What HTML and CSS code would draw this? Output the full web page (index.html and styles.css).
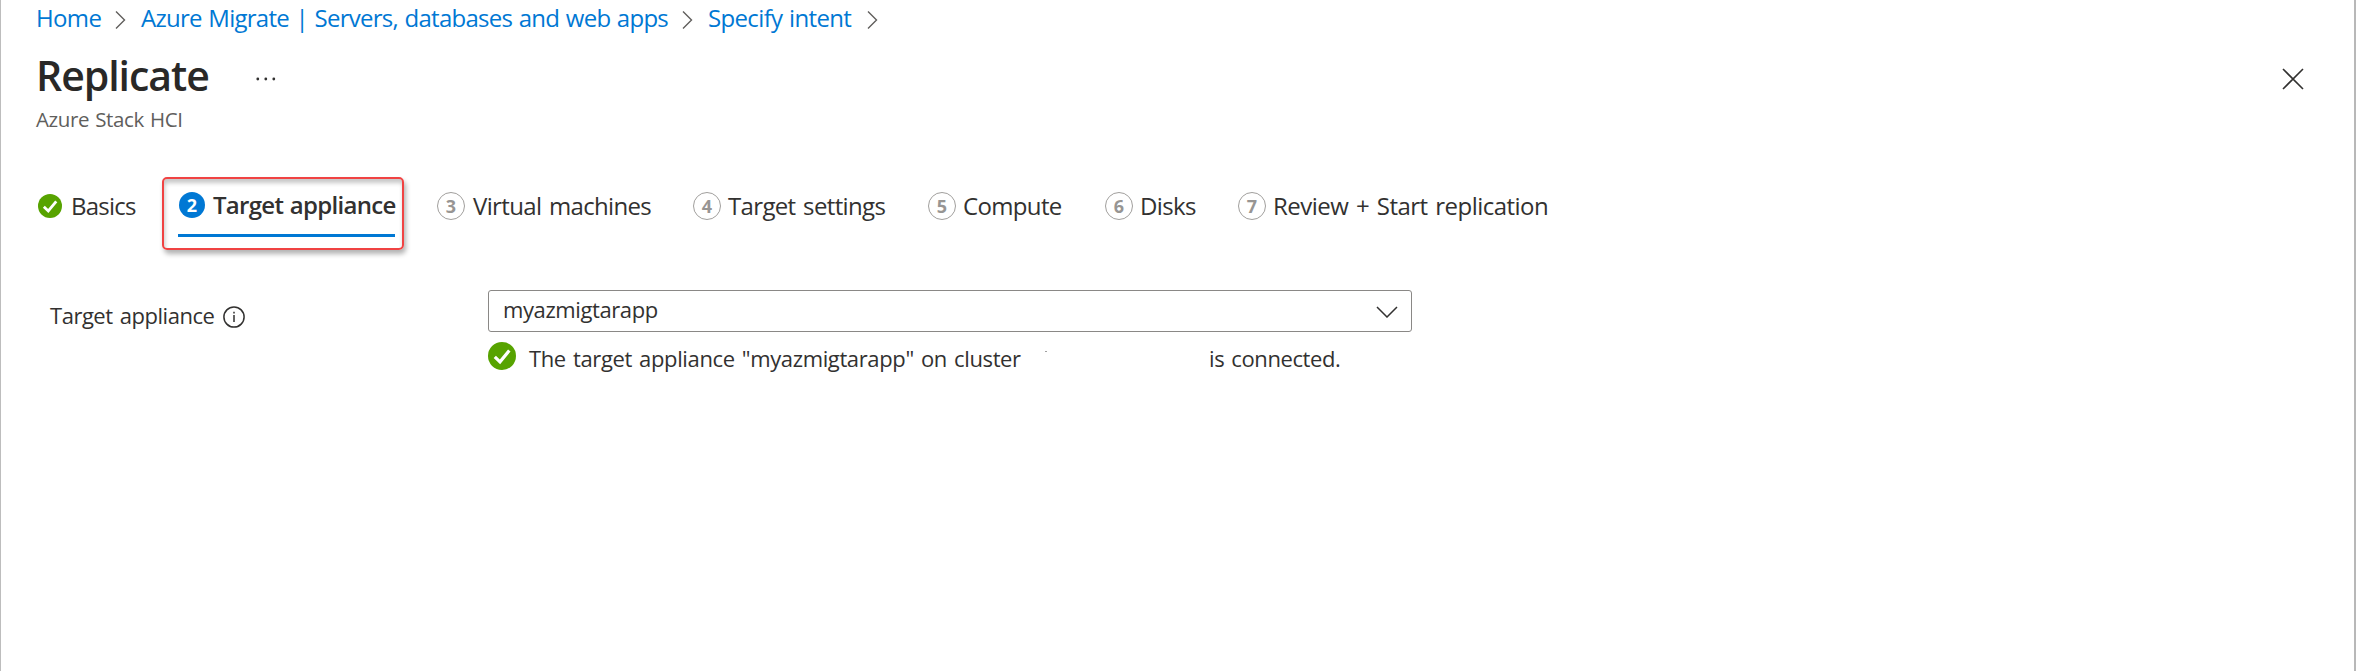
FILE: index.html
```html
<!DOCTYPE html>
<html lang="en">
<head>
<meta charset="utf-8">
<title>Replicate</title>
<link rel="stylesheet" href="styles.css">
</head>
<body>
<main class="blade">
  <nav class="breadcrumb">
    <a class="crumb crumb-home">Home</a>
    <svg class="crumb-sep" viewBox="0 0 12 20"><path d="M1 1.5 9.5 10 1 18.5"/></svg>
    <a class="crumb crumb-project">Azure Migrate | Servers, databases and web apps</a>
    <svg class="crumb-sep" viewBox="0 0 12 20"><path d="M1 1.5 9.5 10 1 18.5"/></svg>
    <a class="crumb crumb-intent">Specify intent</a>
    <svg class="crumb-sep" viewBox="0 0 12 20"><path d="M1 1.5 9.5 10 1 18.5"/></svg>
  </nav>
  <header class="header">
    <h1 class="title">Replicate</h1>
    <svg class="more" viewBox="0 0 20 4"><circle cx="1.8" cy="2" r="1.4"/><circle cx="9.8" cy="2" r="1.4"/><circle cx="17.8" cy="2" r="1.4"/></svg>
    <svg class="close" viewBox="0 0 22 22"><path d="M1 1 21 21M21 1 1 21"/></svg>
  </header>
  <p class="subtitle">Azure Stack HCI</p>
  <ol class="steps">
    <li class="step step-basics"><svg class="check" viewBox="0 0 28 28"><circle cx="14" cy="14" r="14"/><path d="M6.8 14.8 12 19.8 21.3 8.5"/></svg><span>Basics</span></li>
    <li class="step active"><div class="active-inner"><span class="num">2</span><span>Target appliance</span></div></li>
    <li class="step step-vm"><span class="num">3</span><span>Virtual machines</span></li>
    <li class="step step-settings"><span class="num">4</span><span>Target settings</span></li>
    <li class="step step-compute"><span class="num">5</span><span>Compute</span></li>
    <li class="step step-disks"><span class="num">6</span><span>Disks</span></li>
    <li class="step step-review"><span class="num">7</span><span>Review + Start replication</span></li>
  </ol>
  <section class="form">
    <div class="label"><span class="label-text">Target appliance</span><svg class="info" viewBox="0 0 22 22"><circle cx="11" cy="11" r="10.1"/><path d="M11 9v7M11 5.8v1.8"/></svg></div>
    <div class="field">
      <div class="select"><span>myazmigtarapp</span><svg class="caret" viewBox="0 0 22 12"><path d="M1 1 11 11 21 1"/></svg></div>
      <div class="status">
        <svg class="check check-large" viewBox="0 0 28 28"><circle cx="14" cy="14" r="14"/><path d="M6.8 14.8 12 19.8 21.3 8.5"/></svg>
        <span class="message">The target appliance "myazmigtarapp" on cluster</span>
        <span class="speck"></span>
        <span class="connected">is connected.</span>
      </div>
    </div>
  </section>
</main>
</body>
</html>
```
FILE: styles.css
```css
* { box-sizing: border-box; }
body {
  margin: 0;
  background: #fff;
  color: #323130;
  font-family: "Open Sans", "Noto Sans", sans-serif;
}
svg { display: block; flex: none; fill: none; }
span, a, h1, p { white-space: nowrap; }
.blade {
  height: 671px;
  overflow: hidden;
  border-left: 1px solid #bdbdbd;
  border-right: 2px solid #b8b8b8;
}
.breadcrumb {
  display: flex;
  height: 36px;
  padding: 2px 0 0 35px;
  font-size: 24px;
  line-height: 32px;
  color: #0078d4;
}
.crumb { flex: none; letter-spacing: -0.65px; word-spacing: 1px; }
.crumb-home { width: 79px; }
.crumb-project { width: 541px; letter-spacing: -0.73px; }
.crumb-intent { width: 159px; }
.crumb-sep { width: 12px; height: 20px; margin: 8px 14px 0 0; stroke: #605e5c; stroke-width: 1.4; }
.header { display: flex; height: 68px; padding-left: 35px; }
.title {
  width: 220px;
  margin: 11px 0 0;
  font-size: 41px;
  line-height: 56px;
  font-weight: 600;
  letter-spacing: -1.05px;
  color: #292827;
}
.more { width: 20px; height: 4px; margin-top: 41px; fill: #323130; }
.close { width: 22px; height: 22px; margin: 32px 50px 0 auto; stroke: #323130; stroke-width: 1.6; }
.subtitle {
  margin: -1px 0 0 35px;
  height: 74px;
  font-size: 20.5px;
  line-height: 32px;
  letter-spacing: -0.4px;
  word-spacing: 1.3px;
  color: #605e5c;
}
.steps {
  display: flex;
  height: 74px;
  margin: 0;
  padding: 0 0 0 37px;
  list-style: none;
  font-size: 24px;
  line-height: 32px;
  letter-spacing: -0.65px;
  word-spacing: 2px;
}
.step { display: flex; flex: none; height: 32px; margin-top: 13px; align-items: center; }
.step-basics { width: 124px; gap: 9px; letter-spacing: -0.75px; }
.step-vm { width: 256px; }
.step-settings { width: 235px; }
.step-compute { width: 177px; }
.step-disks { width: 133px; }
.step-review { letter-spacing: -0.53px; }
.check { width: 24px; height: 24px; fill: #57a300; }
.check path { fill: none; stroke: #fff; stroke-width: 3.2; }
.num {
  flex: none;
  width: 28px;
  height: 28px;
  margin-right: 7px;
  border: 1px solid #a19f9d;
  border-radius: 50%;
  color: #979593;
  font-size: 18px;
  font-weight: 700;
  line-height: 26px;
  letter-spacing: 0;
  text-align: center;
}
.step-vm .num { margin-right: 8px; }
.active {
  width: 242px;
  height: 73px;
  margin: 0 33px 0 0;
  padding: 0 7px 11px 14px;
  border: 2px solid #f04343;
  border-radius: 5px;
  align-items: stretch;
  box-shadow: 2px 4px 5px rgba(0,0,0,.3), inset 1px 4px 4px rgba(0,0,0,.22);
  font-weight: 600;
  letter-spacing: -0.7px;
  word-spacing: 1px;
}
.active-inner {
  display: flex;
  width: 217px;
  padding-top: 10px;
  border-bottom: 3px solid #0078d4;
}
.active .num { width: 26px; height: 26px; margin: 3px 8px 0 1px; border: 0; background: #0078d4; color: #fff; }
.form { display: flex; padding: 39px 0 0 49px; }
.label { display: flex; width: 438px; padding-top: 9px; font-size: 22px; line-height: 32px; letter-spacing: -0.48px; word-spacing: 2px; }
.label-text { width: 173px; }
.info { width: 22px; height: 22px; margin-top: 7px; stroke: #323130; stroke-width: 1.5; }
.field { width: 924px; font-size: 22px; letter-spacing: -0.4px; }
.select {
  display: flex;
  justify-content: space-between;
  height: 42px;
  padding: 0 13px 0 14px;
  border: 1px solid #8a8886;
  border-radius: 3px;
  line-height: 37px;
}
.caret { width: 22px; height: 12px; margin-top: 15px; stroke: #323130; stroke-width: 1.5; }
.status { display: flex; padding-top: 10px; line-height: 32px; word-spacing: 1.8px; }
.check-large { width: 28px; height: 28px; margin-right: 13px; }
.message { width: 516px; letter-spacing: -0.37px; }
.speck { width: 2px; height: 1px; margin-top: 9px; background: #a0a0a0; }
.connected { margin-left: 162px; }
```
